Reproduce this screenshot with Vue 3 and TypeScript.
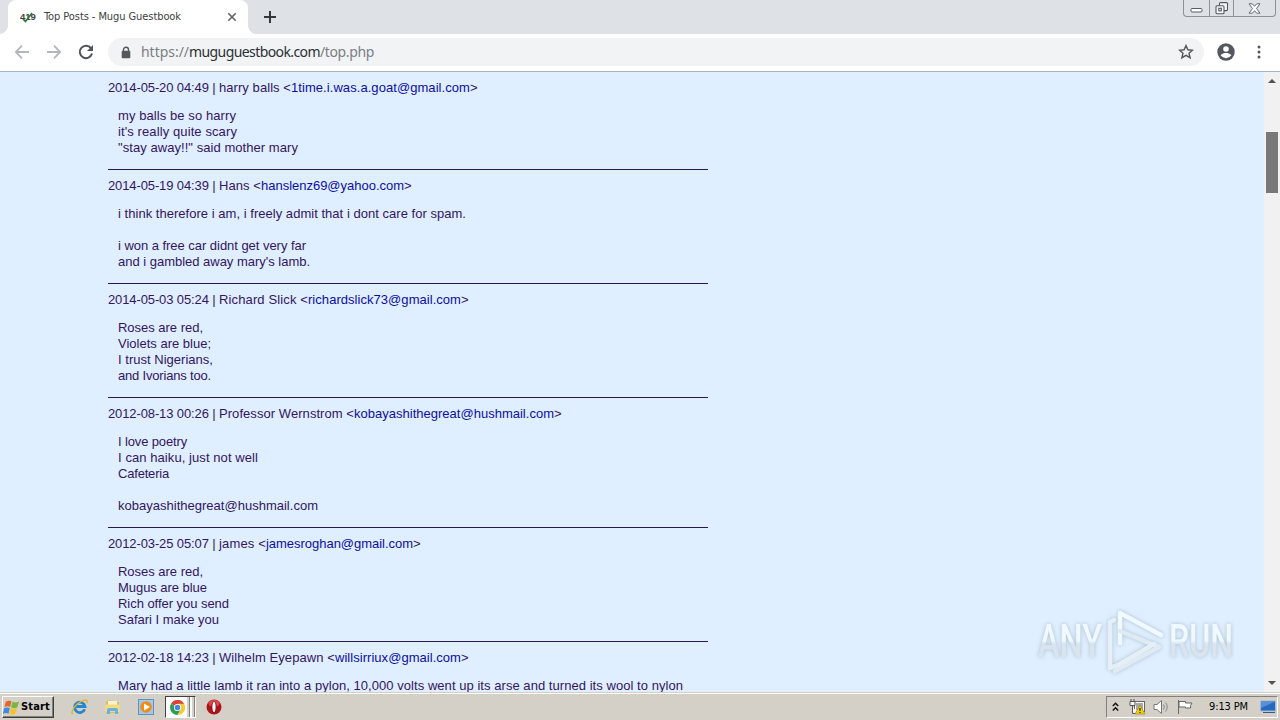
<script setup lang="ts">
import type { Directive } from 'vue'

interface Post {
  stamp: string
  name: string
  nameWidth: number
  email: string
  emailWidth: number
  lines: [string, number][]
}

const posts: Post[] = [
  { stamp: '2014-05-20 04:49', name: 'harry balls <', nameWidth: 72, email: '1time.i.was.a.goat@gmail.com', emailWidth: 179,
    lines: [['my balls be so harry', 118], ["it's really quite scary", 119], ['"stay away!!" said mother mary', 180]] },
  { stamp: '2014-05-19 04:39', name: 'Hans <', nameWidth: 42, email: 'hanslenz69@yahoo.com', emailWidth: 143,
    lines: [['i think therefore i am, i freely admit that i dont care for spam.', 348], ['', 0], ['i won a free car didnt get very far', 188], ["and i gambled away mary's lamb.", 192]] },
  { stamp: '2014-05-03 05:24', name: 'Richard Slick <', nameWidth: 89, email: 'richardslick73@gmail.com', emailWidth: 153,
    lines: [['Roses are red,', 85], ['Violets are blue;', 93], ['I trust Nigerians,', 95], ['and Ivorians too.', 93]] },
  { stamp: '2012-08-13 00:26', name: 'Professor Wernstrom <', nameWidth: 135, email: 'kobayashithegreat@hushmail.com', emailWidth: 200,
    lines: [['I love poetry', 69], ['I can haiku, just not well', 140], ['Cafeteria', 51], ['', 0], ['kobayashithegreat@hushmail.com', 200]] },
  { stamp: '2012-03-25 05:07', name: 'james <', nameWidth: 47, email: 'jamesroghan@gmail.com', emailWidth: 147,
    lines: [['Roses are red,', 85], ['Mugus are blue', 89], ['Rich offer you send', 111], ['Safari I make you', 101]] },
  { stamp: '2012-02-18 14:23', name: 'Wilhelm Eyepawn <', nameWidth: 116, email: 'willsirriux@gmail.com', emailWidth: 126,
    lines: [['Mary had a little lamb it ran into a pylon, 10,000 volts went up its arse and turned its wool to nylon', 565]] },
]

// Spreads the letters of a run so that it takes the given width in pixels.
const vFit: Directive<HTMLElement, number> = {
  mounted(el, { value }) {
    const count = (el.textContent ?? '').length
    if (!count || !value) return
    const natural = el.getBoundingClientRect().width
    el.style.letterSpacing = `${(value - natural) / count}px`
  },
}
</script>

<template>
  <div class="screen">
    <header class="tabs">
      <div class="tab">
        <svg class="fav" width="18" height="14" viewBox="0 0 18 14">
          <text x="0" y="10" font-family="Liberation Sans, sans-serif" font-weight="bold" font-size="9.5" fill="#444">419</text>
          <path d="M3 9l2.500 2.500L12 3" fill="none" stroke="#2b7a34" stroke-width="1.600" />
        </svg>
        <span class="title"><span v-fit="137">Top Posts - Mugu Guestbook</span></span>
        <svg class="close" width="10" height="10" viewBox="0 0 10 10"><path d="M1.300 1.300l7.400 7.400M8.700 1.300L1.300 8.700" stroke="#606468" stroke-width="1.600" /></svg>
        <i class="flare"></i>
      </div>
      <svg class="plus" width="12" height="12" viewBox="0 0 12 12"><path d="M6 0v12M0 6h12" stroke="#33373b" stroke-width="2" /></svg>
      <div class="controls">
        <span class="c1"><svg width="14" height="5" viewBox="0 0 14 5"><rect x="1" y=".5" width="11" height="3.500" rx="1" fill="#fff" stroke="#5a5d63" /></svg></span>
        <span class="c2"><svg width="14" height="13" viewBox="0 0 14 13"><g fill="#f5f6f8" stroke="#555960" stroke-width="1.100"><rect x="4.500" y=".6" width="8" height="8" rx="1" /><rect x="1" y="3.700" width="8" height="8" rx="1" /><rect x="3.800" y="6.300" width="2.500" height="2.500" /></g></svg></span>
        <span class="c3"><svg width="13" height="11" viewBox="0 0 13 11"><path d="M1 .8h3.300l2.200 2.500L8.700.8H12L8.500 5.500l3.500 4.700H8.700L6.500 7.700l-2.200 2.500H1l3.500-4.700z" fill="#fff" stroke="#666a70" /></svg></span>
      </div>
    </header>

    <nav class="toolbar">
      <svg class="nav-icon" width="16" height="16" viewBox="0 0 16 16"><path d="M15 8H2M8 1.700L1.800 8 8 14.300" fill="none" stroke="#b4b6b9" stroke-width="1.800" /></svg>
      <svg class="nav-icon" width="16" height="16" viewBox="0 0 16 16"><path d="M1 8h13M8 1.700L14.200 8 8 14.300" fill="none" stroke="#b4b6b9" stroke-width="1.800" /></svg>
      <svg class="nav-icon" width="16" height="16" viewBox="0 0 16 16"><path d="M13 4.200A6.200 6.200 0 1 0 14 9.600" fill="none" stroke="#505357" stroke-width="2" /><path d="M15 1v6H9z" fill="#505357" /></svg>
      <div class="omnibox">
        <svg class="lock" width="10" height="13" viewBox="0 0 10 13"><path d="M2.500 5.500V3.700a2.500 2.500 0 0 1 5 0v1.800" fill="none" stroke="#54575b" stroke-width="1.400" /><rect x=".7" y="4.800" width="8.600" height="7.400" rx="1" fill="#54575b" /></svg>
        <span class="url"><span v-fit="48" class="dim">https://</span><span v-fit="131">muguguestbook.com</span><span v-fit="54" class="dim">/top.php</span></span>
        <svg class="star" width="16" height="16" viewBox="0 0 16 16"><path d="M8 1.600l1.900 4.200 4.600.4-3.500 3 1.100 4.500L8 11.300l-4.100 2.400L5 9.200l-3.500-3 4.600-.4z" fill="none" stroke="#54575b" stroke-width="1.400" /></svg>
      </div>
      <svg class="person" width="18" height="18" viewBox="0 0 18 18"><circle cx="9" cy="9" r="8.700" fill="#54575b" /><circle cx="9" cy="6" r="2.800" fill="#fff" /><path d="M3.600 12.300C4.700 10.400 7.400 10 9 10s4.300.4 5.400 2.300A6.500 6.500 0 0 1 9 15.200a6.500 6.500 0 0 1-5.400-2.900z" fill="#fff" /></svg>
      <svg class="dots" width="4" height="14" viewBox="0 0 4 14"><g fill="#54575b"><circle cx="2" cy="2" r="1.500" /><circle cx="2" cy="7" r="1.500" /><circle cx="2" cy="12" r="1.500" /></g></svg>
    </nav>

    <div class="viewport">
      <main class="page">
        <article v-for="post in posts" :key="post.stamp" class="post">
          <div class="head"><span v-fit="111">{{ post.stamp + ' | ' }}</span><span v-fit="post.nameWidth">{{ post.name }}</span><a v-fit="post.emailWidth">{{ post.email }}</a><span>&gt;</span></div>
          <div class="body">
            <div v-for="(line, i) in post.lines" :key="i" class="line"><span v-fit="line[1]">{{ line[0] }}</span></div>
          </div>
        </article>
      </main>
      <aside class="scrollbar">
        <svg width="8" height="4" viewBox="0 0 8 4"><path d="M0 4l4-4 4 4z" fill="#505050" /></svg>
        <div class="thumb"></div>
        <svg class="down" width="8" height="4" viewBox="0 0 8 4"><path d="M0 0l4 4 4-4z" fill="#505050" /></svg>
      </aside>
      <svg class="watermark" width="230" height="80" viewBox="0 0 230 80">
        <defs><linearGradient id="wm" x1="0" y1="0" x2="0" y2="1"><stop offset=".5" stop-color="#f0f9ff" /><stop offset=".56" stop-color="#d9e4ee" /></linearGradient></defs>
        <g class="glow" fill="url(#wm)">
          <text x="7" y="54" textLength="64" lengthAdjust="spacingAndGlyphs">ANY</text>
          <text x="138" y="54" textLength="64" lengthAdjust="spacingAndGlyphs">RUN</text>
        </g>
        <g class="glow" fill="none" stroke-width="4.500" stroke-linejoin="round" stroke-linecap="round">
          <path d="M89 40V10L130 32" stroke="#f0f9ff" />
          <path d="M89 28l39 16-44 24" stroke="#dfeaf3" />
          <path d="M83 17l-4 2v46l10-4M89 61l34-20" stroke="#e5eff7" />
        </g>
      </svg>
    </div>

    <footer class="taskbar">
      <div class="start">
        <svg width="18" height="17" viewBox="0 0 19 17"><path d="M3 2.500q3-2 6-.5L7.500 8q-3-1.500-6 .2z" fill="#e8632c" /><path d="M10 2.400q3 1.700 7-.2L15 8.500q-3 1.600-6.400-.2z" fill="#75b83b" /><path d="M1.200 9.200q3-1.600 6-.1L5.800 15q-3-1.400-6 .2z" fill="#3d8be0" /><path d="M8.200 9.300q3 1.600 6.500 0L13 15.300q-3 1.600-6.400 0z" fill="#f5c32e" /></svg>
        <b v-fit="29">Start</b>
      </div>
      <div class="quick">
        <svg width="18" height="18" viewBox="0 0 18 18"><path d="M13.700 11.300A5.200 5.200 0 1 1 14 8.500H5" fill="none" stroke="#2586d2" stroke-width="2.800" /><path d="M2 15.600C-1.500 16 4 5.200 12.500 2.400c4-1.200 4.400.2 3.200 2.700" fill="none" stroke="#e3b52d" stroke-width="1.400" /></svg>
        <svg width="18" height="18" viewBox="0 0 18 18"><path d="M2 4l1-1.500h5L9 4h6v11H2z" fill="#e0bd5c" /><path d="M4 3h9v4H4z" fill="#faf2cf" /><path d="M1.500 6.500h14V14h-14z" fill="#f5dc83" /><path d="M3 16v-4q0-2 2-2h7q2 0 2 2v4h-3v-3H6v3z" fill="#67b2de" /></svg>
        <svg width="18" height="18" viewBox="0 0 18 18"><rect x="1.500" y="1.500" width="15" height="15" fill="#a3c8e8" stroke="#5b93c7" /><circle cx="9" cy="9" r="5.800" fill="#f28a16" /><path d="M7 5.500l6 3.500-6 3.500z" fill="#fff" /></svg>
      </div>
      <div class="running">
        <svg width="15" height="15" viewBox="0 0 16 16"><path d="M8 8L1.100 4A8 8 0 0 1 15 4z" fill="#dc4336" /><path d="M8 8L1.100 4A8 8 0 0 0 8 16l3.500-6z" fill="#2c9d57" /><path d="M8 8l3.500 2L8 16A8 8 0 0 0 15 4H8z" fill="#f8c931" /><circle cx="8" cy="8" r="3.800" fill="#fff" /><circle cx="8" cy="8" r="2.900" fill="#4285e8" /></svg>
        <i class="edge"></i><i class="edge"></i>
      </div>
      <svg class="opera" width="16" height="16" viewBox="0 0 16 16"><circle cx="8" cy="8" r="7.500" fill="#b0121b" /><ellipse cx="8" cy="4.500" rx="5.500" ry="3.500" fill="#d84a4a" /><ellipse cx="8" cy="8" rx="2.600" ry="5.500" fill="#8a0c12" /><ellipse cx="8" cy="8" rx="1.600" ry="5" fill="#fff" /></svg>
      <div class="tray">
        <svg class="chev" width="7" height="10" viewBox="0 0 7 10"><path d="M.8 4l2.700-2.700L6.200 4M.8 8.500l2.700-2.700 2.700 2.700" fill="none" stroke="#111" stroke-width="1.500" /></svg>
        <svg class="net" width="17" height="16" viewBox="0 0 17 16"><rect x="5.500" y="2.500" width="10" height="10" fill="#a5a9ac" stroke="#666" /><rect x="6.500" y="3.500" width="8" height="8" fill="none" stroke="#fff" /><path d="M1 2.500h5v4H1zM2 0v2.500M5 0v2.500M3.500 7v7.500h5" fill="#f5f5f5" stroke="#555" /><path d="M11 6l5 9H6z" fill="#f5d10c" stroke="#9a8200" stroke-width=".6" /><path d="M11 9v3M11 13v1" stroke="#222" stroke-width="1.300" /></svg>
        <svg class="vol" width="17" height="16" viewBox="0 0 17 16"><path d="M1 5.500h3L8.500 1.500v13L4 10.500H1z" fill="#fff" stroke="#777" /><path d="M10.500 5.500q2 2.500 0 5M12.500 3.500q3.500 4.500 0 9" fill="none" stroke="#888" /></svg>
        <svg class="flag" width="17" height="16" viewBox="0 0 17 16"><path d="M1.500 1v14M2 2.500h6.500v1.500h6.500q-2 2.500-1.500 5H8.500V8H2z" fill="#fff" stroke="#666" /></svg>
        <span class="clock"><span v-fit="39">9:13 PM</span></span>
        <svg class="desk" width="16" height="14" viewBox="0 0 16 14"><path d="M.5 1h15v10H.5z" fill="#2868bf" stroke="#9fb9d6" /><path d="M1 2h13L1 8z" fill="#5591d6" /><path d="M3 12.500h12" stroke="#34588a" /></svg>
      </div>
    </footer>
  </div>
</template>

<style>
body { margin: 0; overflow: hidden; }
</style>

<style scoped>
.screen { width: 1280px; height: 720px; display: flex; flex-direction: column; overflow: hidden; background: #dfefff; font-family: "Liberation Sans", Arial, sans-serif; }
.screen svg { display: block; flex: none; }
.tabs { height: 34px; flex: none; background: #dee1e6; display: flex; align-items: flex-start; box-sizing: border-box; padding-left: 8px; }
.tab { position: relative; box-sizing: border-box; width: 240px; height: 34px; background: #fff; border-radius: 8px 8px 0 0; display: flex; align-items: center; padding-left: 12px; }
.tab::before, .flare { content: ""; position: absolute; bottom: 0; width: 8px; height: 8px; }
.tab::before { left: -8px; background: radial-gradient(circle at 0 0, #dee1e6 7.5px, #fff 8px); }
.flare { right: -8px; background: radial-gradient(circle at 100% 0, #dee1e6 7.5px, #fff 8px); }
.title { width: 183px; margin-left: 6px; font: 11px/16px "DejaVu Sans Condensed", "DejaVu Sans", sans-serif; color: #3c3e42; white-space: pre; }
.plus { margin: 11px 0 0 16px; }
.controls { margin-left: auto; margin-right: 4px; display: flex; width: 93px; height: 17px; box-sizing: border-box; border: 1px solid #8c9097; border-top: 0; border-radius: 0 0 4px 4px; }
.controls span { display: flex; justify-content: center; align-items: center; box-sizing: border-box; }
.c1 { width: 25px; padding-top: 4px; }
.c2 { width: 25px; border: solid #8c9097; border-width: 0 1px; }
.c3 { flex: 1; }
.toolbar { height: 38px; flex: none; box-sizing: border-box; background: #fff; border-bottom: 1px solid #a8b5be; display: flex; align-items: center; padding: 0 19px 1px 14px; }
.nav-icon { margin-right: 16px; }
.omnibox { margin-left: -2px; width: 1096px; height: 28px; box-sizing: border-box; border-radius: 14px; background: #f1f3f4; display: flex; align-items: center; padding: 0 10px 0 13px; }
.url { margin-left: 10px; font: 14px/20px "Noto Sans", "Open Sans", sans-serif; white-space: pre; color: #2c3034; }
.dim { color: #7b7f84; }
.star { margin-left: auto; }
.person { margin-left: 13px; }
.dots { margin-left: auto; }
.viewport { position: relative; height: 620px; flex: none; display: flex; overflow: hidden; }
.page { flex: 1; padding: 8px 0 0 108px; background: #dfefff; color: #331560; font-size: 13px; line-height: 16px; }
.post { width: 600px; border-bottom: 1px solid #29174f; margin-bottom: 8px; padding-bottom: 13px; }
.head { height: 16px; white-space: pre; }
.head a { color: #0d0da2; }
.body { padding: 12px 0 0 10px; }
.line { height: 16px; white-space: pre; }
.scrollbar { width: 16px; box-sizing: border-box; background: #f1f1f1; display: flex; flex-direction: column; align-items: center; padding: 7px 0 7px; }
.thumb { width: 12px; height: 61px; background: #787878; margin-top: 49px; }
.down { margin-top: auto; }
.watermark { position: absolute; left: 1031px; top: 531px; }
.watermark text { font: 500 47px Roboto, "Liberation Sans", sans-serif; }
.glow { filter: drop-shadow(0 0 2px rgba(130, 150, 170, .55)); }
.taskbar { height: 28px; flex: none; background: #d4d0c8; box-sizing: border-box; box-shadow: inset 0 1px #d4d0c8, inset 0 2px #fff; display: flex; align-items: flex-start; padding: 4px 2px 0; }
.start { width: 52px; height: 22px; box-sizing: border-box; border: 1px solid; border-color: #fff #404040 #404040 #fff; box-shadow: inset -1px -1px #808080; display: flex; align-items: center; }
.start b { font: bold 11px/16px "DejaVu Sans Condensed", sans-serif; color: #000; }
.quick { display: flex; gap: 15px; margin: 2px 0 0 17px; }
.running { margin-left: 10px; width: 31px; height: 22px; box-sizing: border-box; border: 1px solid; border-color: #404040 #fff #fff #404040; background: #fff; display: flex; align-items: center; padding-left: 4px; }
.edge { width: 2px; height: 20px; margin-left: 2px; background: #d4d0c8; border-right: 1px solid #808080; }
.opera { margin: 3px 0 0 10px; }
.tray { margin-left: auto; width: 172px; height: 22px; box-sizing: border-box; border: 1px solid; border-color: #808080 #fff #fff #808080; display: flex; align-items: center; }
.chev { margin-left: 5px; }
.net { margin-left: 10px; }
.vol { margin-left: 7px; }
.flag { margin-left: 7px; }
.clock { margin-left: 15px; width: 39px; font: 11px/16px "DejaVu Sans Condensed", sans-serif; color: #000; white-space: pre; }
.desk { margin-left: 12px; }
</style>
